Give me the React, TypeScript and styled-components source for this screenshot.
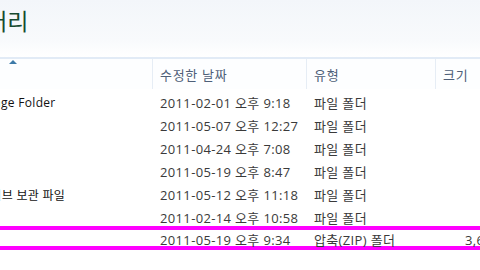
import styled, { createGlobalStyle } from "styled-components";

const GlobalStyle = createGlobalStyle`
    html, body {
        margin:0;
        padding:0;
        background:#ffffff;
    }
    body {
        font-family:"Open Sans", "Noto Sans CJK KR", sans-serif;
        width:480px;
        height:270px;
        overflow:hidden;
    }
`;

const Viewport = styled.div`
    width:480px;
    height:270px;
    overflow:hidden;
    background:linear-gradient(180deg, #f3f6fa 0px, #f8fafc 40px, #ffffff 57px);
`;

// the window is wider than the picture: its left part lies outside the view
const Sheet = styled.div`
    margin-left:-160px;
    width:800px;
`;

const TitleBar = styled.div`
    height:57px;
    display:flex;
    align-items:flex-start;
    padding-left:125px;
`;

const Title = styled.h1`
    margin:0;
    padding-top:3px;
    font-family:"Noto Sans CJK KR", sans-serif;
    font-size:23px;
    font-weight:400;
    color:#174a30;
`;

const Header = styled.div`
    display:grid;
    grid-template-columns:313px 154px 129px 1fr;
    height:30px;
    border-top:2px solid #e2ebf6;
    background:#fdfeff;
`;

const HeaderCell = styled.div<{ $first?: boolean }>`
    position:relative;
    display:flex;
    align-items:center;
    padding-left:${(p) => (p.$first ? 0 : 7)}px;
    font-size:13px;
    letter-spacing:0.7px;
    color:#4e5f78;
    border-right:1px solid #e6edf5;
`;

const SortArrow = styled.span`
    position:absolute;
    top:1px;
    left:169px;
    width:0;
    height:0;
    border-left:4px solid transparent;
    border-right:4px solid transparent;
    border-bottom:4px solid #3d7aa8;
`;

const Rows = styled.div`
    padding-top:2px;
`;

const Row = styled.div<{ $marked?: boolean }>`
    display:grid;
    grid-template-columns:313px 154px 129px 1fr;
    height:23px;
    box-sizing:border-box;
    align-items:center;
    font-size:13px;
    letter-spacing:0.35px;
    ${(p) =>
        p.$marked &&
        `
        border-top:4px solid #ff00ff;
        border-bottom:4px solid #ff00ff;
        height:24px;
        margin-top:-3px;
    `}
`;

const Name = styled.div`
    padding-left:139px;
    font-size:12px;
    letter-spacing:0.3px;
    color:#111111;
    white-space:nowrap;
    overflow:hidden;
`;

const Cell = styled.div<{ $size?: boolean }>`
    padding-left:${(p) => (p.$size ? 29 : 7)}px;
    color:#3a3a3a;
    white-space:nowrap;
`;

interface IFile {
    name: string;
    date: string;
    type: string;
    size: string;
}

const files: IFile[] = [
    { name: "Image Folder", date: "2011-02-01 오후 9:18", type: "파일 폴더", size: "" },
    { name: "", date: "2011-05-07 오후 12:27", type: "파일 폴더", size: "" },
    { name: "", date: "2011-04-24 오후 7:08", type: "파일 폴더", size: "" },
    { name: "", date: "2011-05-19 오후 8:47", type: "파일 폴더", size: "" },
    { name: "카이브 보관 파일", date: "2011-05-12 오후 11:18", type: "파일 폴더", size: "" },
    { name: "", date: "2011-02-14 오후 10:58", type: "파일 폴더", size: "" },
    { name: "", date: "2011-05-19 오후 9:34", type: "압축(ZIP) 폴더", size: "3,648KB" },
];

function App() {
    return (
        <Viewport>
            <GlobalStyle />
            <Sheet>
                <TitleBar>
                    <Title>갤러리</Title>
                </TitleBar>
                <Header>
                    <HeaderCell $first>
                        <SortArrow />
                    </HeaderCell>
                    <HeaderCell>수정한 날짜</HeaderCell>
                    <HeaderCell>유형</HeaderCell>
                    <HeaderCell>크기</HeaderCell>
                </Header>
                <Rows>
                    {files.map((f, i) => (
                        <Row key={i} $marked={i === files.length - 1}>
                            <Name>{f.name}</Name>
                            <Cell>{f.date}</Cell>
                            <Cell>{f.type}</Cell>
                            <Cell $size>{f.size}</Cell>
                        </Row>
                    ))}
                </Rows>
            </Sheet>
        </Viewport>
    );
}

export default App;
